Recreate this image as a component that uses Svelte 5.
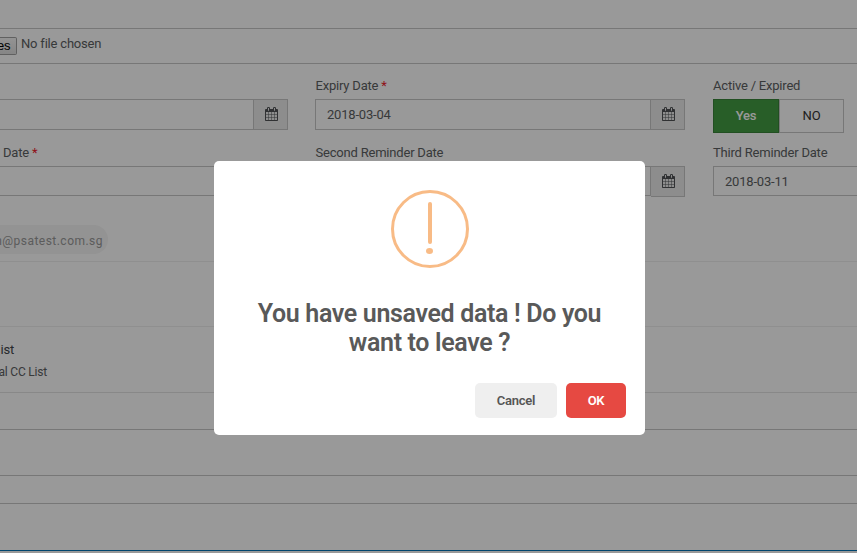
<script>
  const title = ['You have unsaved data ! Do you', 'want to leave ?'];
</script>

{#snippet calendar()}
  <span class="addon">
    <svg width="13" height="14" viewBox="0 0 1664 1792" aria-hidden="true"><path fill="currentColor" d="M128 1664h288v-288h-288v288zM480 1664h320v-288h-320v288zM128 1312h288v-320h-288v320zM480 1312h320v-320h-320v320zM128 928h288v-288h-288v288zM864 1664h320v-288h-320v288zM480 928h320v-288h-320v288zM1248 1664h288v-288h-288v288zM864 1312h320v-320h-320v320zM512 448v-288q0-13-9.500-22.500t-22.500-9.500h-64q-13 0-22.500 9.500t-9.500 22.500v288q0 13 9.500 22.500t22.500 9.500h64q13 0 22.500-9.500t9.500-22.500zM1248 1312h288v-320h-288v320zM864 928h320v-288h-320v288zM1248 928h288v-288h-288v288zM1280 448v-288q0-13-9.500-22.500t-22.500-9.500h-64q-13 0-22.500 9.500t-9.500 22.500v288q0 13 9.500 22.500t22.500 9.500h64q13 0 22.500-9.500t9.500-22.500zM1664 384v1280q0 52-38 90t-90 38h-1408q-52 0-90-38t-38-90v-1280q0-52 38-90t90-38h128v-96q0-66 47-113t113-47h64q66 0 113 47t47 113v96h384v-96q0-66 47-113t113-47h64q66 0 113 47t47 113v96h128q52 0 90 38t38 90z"/></svg>
  </span>
{/snippet}

<div class="page">
  <div class="row top"></div>
  <div class="row upload">
    <span class="file-btn">es</span><span class="file-name">No file chosen</span>
  </div>
  <div class="row dates">
    <div class="fields">
      <div class="col first">
        <div class="label"></div>
        <div class="group"><div class="input"></div>{@render calendar()}</div>
      </div>
      <div class="col middle">
        <div class="label">Expiry Date <b>*</b></div>
        <div class="group"><div class="input">2018-03-04</div>{@render calendar()}</div>
      </div>
      <div class="col last">
        <div class="label">Active / Expired</div>
        <div class="toggle"><span class="yes">Yes</span><span class="no">NO</span></div>
      </div>
    </div>
    <div class="fields">
      <div class="col first">
        <div class="label inset">Date <b>*</b></div>
        <div class="group"><div class="input short"></div>{@render calendar()}</div>
      </div>
      <div class="col middle">
        <div class="label">Second Reminder Date</div>
        <div class="group"><div class="input short"></div>{@render calendar()}</div>
      </div>
      <div class="col last">
        <div class="label">Third Reminder Date</div>
        <div class="group"><div class="input short">2018-03-11</div></div>
      </div>
    </div>
    <div class="chip">n@psatest.com.sg</div>
  </div>
  <div class="row gap"></div>
  <div class="row list">
    <div class="list-title">ist</div>
    <div class="list-sub">al CC List</div>
  </div>
  <div class="row a"></div>
  <div class="row b"></div>
  <div class="row c"></div>
  <div class="row d"></div>
</div>

<div class="overlay">
  <div class="modal">
    <div class="warning"><i class="bar"></i><i class="dot"></i></div>
    <div class="title">{#each title as line}<div>{line}</div>{/each}</div>
    <div class="actions">
      <button class="cancel">Cancel</button>
      <button class="ok">OK</button>
    </div>
  </div>
</div>

<style>
  :global(body) { margin: 0; overflow: hidden; }
  .page, .overlay { font-family: Roboto, "Liberation Sans", sans-serif; box-sizing: border-box; }
  .page *, .overlay * { box-sizing: border-box; }
  .page { width: 857px; height: 553px; overflow: hidden; background: #fff; color: #5d6163; font-size: 13px; letter-spacing: -.2px; }
  .row { border-bottom: 1px solid #c6c6c6; }
  .top { height: 29px; }
  .upload { height: 35px; display: flex; align-items: flex-start; }
  .file-btn { width: 17px; height: 18px; margin-top: 8px; padding-right: 6px; display: flex; justify-content: flex-end; align-items: center; border: 1px solid #a0a0a0; border-left: 0; border-radius: 0 2px 2px 0; background: linear-gradient(#f6f6f6, #dedede); color: #000; font: 13px/16px "Liberation Sans", Arial, sans-serif; letter-spacing: -.4px; }
  .file-name { margin: 7px 0 0 4px; line-height: 16px; }
  .dates { height: 198px; padding-top: 11px; border-color: #efefef; }
  .fields { display: flex; height: 67px; }
  .col { flex: none; }
  .first { width: 288px; margin-right: 27px; }
  .middle { width: 370px; margin-right: 28px; }
  .last { width: 180px; }
  .label { height: 24px; padding-left: .5px; line-height: 22px; white-space: nowrap; }
  .last .label { padding-left: 0; }
  .label.inset { padding-left: 3px; }
  .label b { color: #f0202c; font-weight: 400; }
  .group { display: flex; align-items: flex-start; }
  .input { flex: 1; height: 31px; padding-left: 11px; border: 1px solid #c6c6c6; line-height: 29px; }
  .first .input { border-left: 0; }
  .short { height: 30px; }
  .addon { width: 34px; height: 31px; padding-left: 1px; display: flex; align-items: center; justify-content: center; border: 1px solid #c6c6c6; border-left: 0; background: #ebebeb; color: #505356; }
  .addon svg { margin-bottom: 2px; }
  .toggle { display: flex; width: 131px; height: 34px; line-height: 32px; text-align: center; }
  .yes { width: 66px; background: #449d44; border: 1px solid #398439; color: #fff; font-weight: 500; }
  .no { flex: 1; border: 1px solid #c6c6c6; color: #333; }
  .chip { width: 108px; height: 29px; margin-top: 16px; padding-right: 5px; border-radius: 0 15px 15px 0; background: #f5f5f5; color: #999; font-size: 12px; letter-spacing: .48px; line-height: 32px; white-space: nowrap; display: flex; justify-content: flex-end; }
  .gap { height: 65px; border-color: #efefef; }
  .list { height: 66px; padding-top: 14px; border-color: #e3e3e3; }
  .list-title { height: 22px; line-height: 18px; color: #42464a; padding-left: .5px; }
  .list-sub { line-height: 18px; font-size: 12px; margin-left: -1.5px; }
  .a { height: 37px; }
  .b { height: 46px; }
  .c { height: 28px; }
  .d { height: 47px; border-color: #0073b7; }
  .overlay { position: absolute; top: 0; left: 0; width: 857px; height: 553px; background: rgba(0, 0, 0, .4); }
  .modal { width: 431px; height: 274px; margin: 161px 0 0 214px; padding-top: 29px; border-radius: 5px; background: #fff; float: left; }
  .warning { width: 78px; height: 78px; margin: 0 auto 0 177px; padding-top: 9px; border: 3px solid #f8bb86; border-radius: 50%; display: flex; flex-direction: column; align-items: center; }
  .bar { width: 4px; height: 42px; border-radius: 2px; background: #f8bb86; }
  .dot { width: 7px; height: 6px; margin: 4px 1px 0 0; border-radius: 50%; background: #f8bb86; }
  .title { margin-top: 31px; color: #595959; font-size: 25px; font-weight: 600; letter-spacing: -.34px; line-height: 29px; text-align: center; white-space: nowrap; }
  .actions { display: flex; justify-content: flex-end; gap: 9px; margin-top: 26px; padding-right: 19px; }
  button { height: 35px; padding: 0; border: 0; border-radius: 5px; font: 600 13px Roboto, sans-serif; letter-spacing: -.25px; }
  .cancel { width: 82px; background: #efefef; color: #555; }
  .ok { width: 60px; background: #e64942; color: #fff; }
</style>
